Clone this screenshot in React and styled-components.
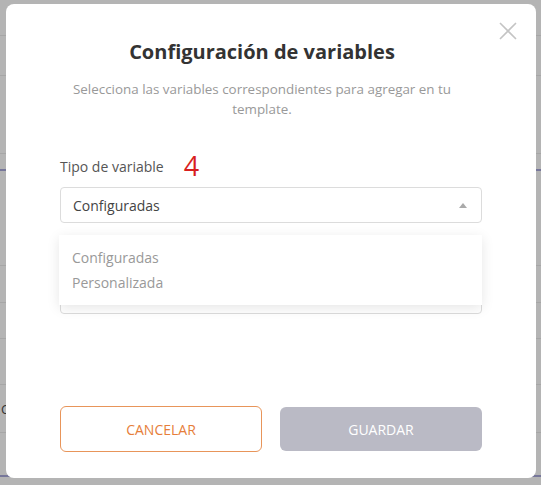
import React from "react";
import styled, { createGlobalStyle } from "styled-components";

const GlobalStyle = createGlobalStyle`
  html, body {
    margin: 0;
    padding: 0;
    background: #b4b4b4;
    font-family: "Open Sans", "Noto Sans", sans-serif;
  }
`;

const Page = styled.div`
  position: relative;
  width: 541px;
  height: 485px;
  overflow: hidden;
  background: #b4b4b4;
`;

// rows of the table that sits behind the overlay
const BackRow = styled.div`
  height: ${(p) => p.h}px;
  box-sizing: border-box;
  border-bottom: ${(p) => (p.accent ? "2px solid #77779a" : "1px solid #a6a6a6")};
  font-size: 13px;
  color: #333;
  display: flex;
  align-items: center;
  padding-left: 1px;
`;

const Modal = styled.div`
  position: absolute;
  top: 4px;
  left: 6px;
  width: 530px;
  height: 474px;
  box-sizing: border-box;
  background: #fff;
  border-radius: 8px;
  padding: 34px 54px 0 54px;
  display: flex;
  flex-direction: column;
`;

const CloseButton = styled.button`
  position: absolute;
  top: 15px;
  right: 16px;
  width: 24px;
  height: 24px;
  padding: 0;
  border: none;
  background: none;
  display: flex;
  align-items: center;
  justify-content: center;
`;

const Header = styled.div`
  padding-right: 18px;
`;

const Title = styled.h2`
  margin: 0;
  text-align: center;
  font-size: 20px;
  font-weight: 700;
  color: #333;
  line-height: 28px;
`;

const Subtitle = styled.p`
  margin: 13px 10px 0;
  text-align: center;
  font-size: 13.4px;
  line-height: 20px;
  color: #999;
`;

const LabelRow = styled.div`
  margin-top: 35px;
  display: flex;
  align-items: center;
  gap: 20px;
  height: 24px;
`;

const Label = styled.span`
  font-size: 14px;
  color: #555;
`;

const StepNumber = styled.span`
  font-size: 27px;
  color: #d81e1e;
  line-height: 24px;
`;

const SelectWrap = styled.div`
  position: relative;
  margin-top: 9px;
`;

const SelectBox = styled.div`
  height: 36px;
  box-sizing: border-box;
  border: 1px solid #dcdcdc;
  border-radius: 4px;
  display: flex;
  align-items: center;
  justify-content: space-between;
  padding: 0 14px 0 12px;
  font-size: 14px;
  color: #444;
`;

const Caret = styled.span`
  width: 0;
  height: 0;
  border-left: 4px solid transparent;
  border-right: 4px solid transparent;
  border-bottom: 5px solid #aaa;
`;

const SecondBox = styled.div`
  margin-top: 55px;
  height: 36px;
  box-sizing: border-box;
  border: 1px solid #dcdcdc;
  border-radius: 4px;
`;

const Menu = styled.ul`
  position: absolute;
  top: 48px;
  left: -1px;
  right: 0;
  margin: 0;
  padding: 10px 13px;
  list-style: none;
  background: #fff;
  box-shadow: 0 3px 12px rgba(0, 0, 0, 0.1);
`;

const MenuItem = styled.li`
  font-size: 14px;
  line-height: 25px;
  color: #999;
`;

const Actions = styled.div`
  margin-top: auto;
  margin-bottom: 26px;
  display: grid;
  grid-template-columns: 1fr 1fr;
  gap: 18px;
`;

const Button = styled.button`
  height: ${(p) => (p.primary ? "44px" : "46px")};
  margin-top: ${(p) => (p.primary ? "1px" : "0")};
  border-radius: 6px;
  font-family: inherit;
  font-size: 14px;
  text-transform: uppercase;
  border: ${(p) => (p.primary ? "none" : "1px solid #e8955a")};
  background: ${(p) => (p.primary ? "#babac5" : "#fff")};
  color: ${(p) => (p.primary ? "#fff" : "#e67e3a")};
`;

const backRows = [
  { h: 36 }, { h: 40 }, { h: 78 }, { h: 17, accent: true }, { h: 95 },
  { h: 37 }, { h: 36 }, { h: 46 }, { h: 48, text: "C" }, { h: 44, accent: true },
];

export default function App() {
  return (
    <Page>
      <GlobalStyle />
      {backRows.map((r, i) => (
        <BackRow key={i} h={r.h} accent={r.accent}>
          {r.text}
        </BackRow>
      ))}
      <Modal>
        <CloseButton aria-label="Cerrar">
          <svg width="18" height="18" viewBox="0 0 18 18">
            <path d="M1 1L17 17M17 1L1 17" stroke="#c4c4c4" strokeWidth="1.6" />
          </svg>
        </CloseButton>
        <Header>
          <Title>Configuración de variables</Title>
          <Subtitle>
            Selecciona las variables correspondientes para agregar en tu template.
          </Subtitle>
        </Header>
        <LabelRow>
          <Label>Tipo de variable</Label>
          <StepNumber>4</StepNumber>
        </LabelRow>
        <SelectWrap>
          <SelectBox>
            Configuradas
            <Caret />
          </SelectBox>
          <Menu>
            <MenuItem>Configuradas</MenuItem>
            <MenuItem>Personalizada</MenuItem>
          </Menu>
          <SecondBox />
        </SelectWrap>
        <Actions>
          <Button>Cancelar</Button>
          <Button primary>Guardar</Button>
        </Actions>
      </Modal>
    </Page>
  );
}
